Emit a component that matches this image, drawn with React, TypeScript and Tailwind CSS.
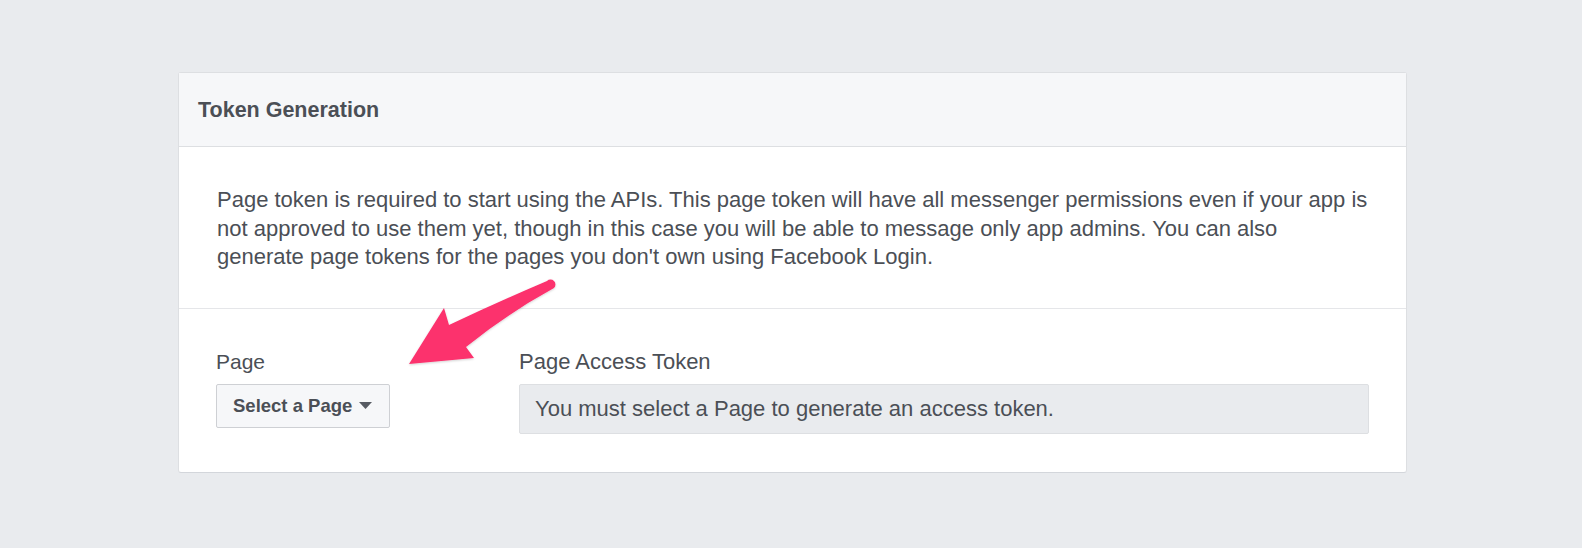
import React from "react";

export default function App() {
  return (
    <div className="relative min-h-[548px] bg-[#e9ebee] pt-[72px] pl-[178px] font-['Liberation_Sans',Arial,sans-serif] text-[#4b4f56]">
      <div className="w-[1229px] rounded-[3px] border border-[#dddfe2] border-b-[#d3d6db] bg-white">
        <div className="flex h-[74px] items-center border-b border-[#dddfe2] bg-[#f6f7f9] px-[19px]">
          <h2 className="mt-[3px] text-[21.5px] font-bold leading-none text-[#4b4f56]">Token Generation</h2>
        </div>
        <div className="border-b border-[#e5e6e9] px-[38px] pt-[39px] pb-[36px]">
          <p className="text-[22px] leading-[28.5px]">
            Page token is required to start using the APIs. This page token will have all messenger permissions even if your app is not approved to use them yet, though in this case you will be able to message only app admins. You can also generate page tokens for the pages you don't own using Facebook Login.
          </p>
        </div>
        <div className="flex px-[37px] pt-[41px] pb-[38px]">
          <div className="flex w-[303px] shrink-0 flex-col items-start gap-[10px]">
            <label className="text-[21px] leading-[24px]">Page</label>
            <button className="flex h-[44px] items-center gap-[7px] rounded-[2px] border border-[#ced0d4] bg-[#f6f7f9] pl-[16px] pr-[17px] text-[18.5px] font-bold text-[#4b4f56]">
              <span>Select a Page</span>
              <svg width="13" height="8" viewBox="0 0 13 8" className="mt-[1px]">
                <path d="M0 0 L13 0 L6.5 7 Z" fill="#575b63" />
              </svg>
            </button>
          </div>
          <div className="flex flex-1 flex-col gap-[10px]">
            <label className="text-[22px] leading-[24px]">Page Access Token</label>
            <div className="flex h-[50px] items-center rounded-[2px] border border-[#dddfe2] bg-[#e9ebee] px-[15px] text-[22px] text-[#4b4f56]">
              You must select a Page to generate an access token.
            </div>
          </div>
        </div>
      </div>

      <svg
        className="pointer-events-none absolute left-[400px] top-[275px]"
        width="160"
        height="95"
        viewBox="0 0 160 95"
      >
        <defs>
          <filter id="sh" x="-20%" y="-20%" width="140%" height="140%">
            <feDropShadow dx="0" dy="1" stdDeviation="1" floodColor="#000" floodOpacity="0.18" />
          </filter>
        </defs>
        <path
          d="M147 6 Q100 26 49 50 L44 33 L9 89 L74 83 L66 72 Q108 38 154 13 A4.8 4.8 0 0 0 147 6 Z"
          fill="#fc306d"
          filter="url(#sh)"
        />
      </svg>
    </div>
  );
}
